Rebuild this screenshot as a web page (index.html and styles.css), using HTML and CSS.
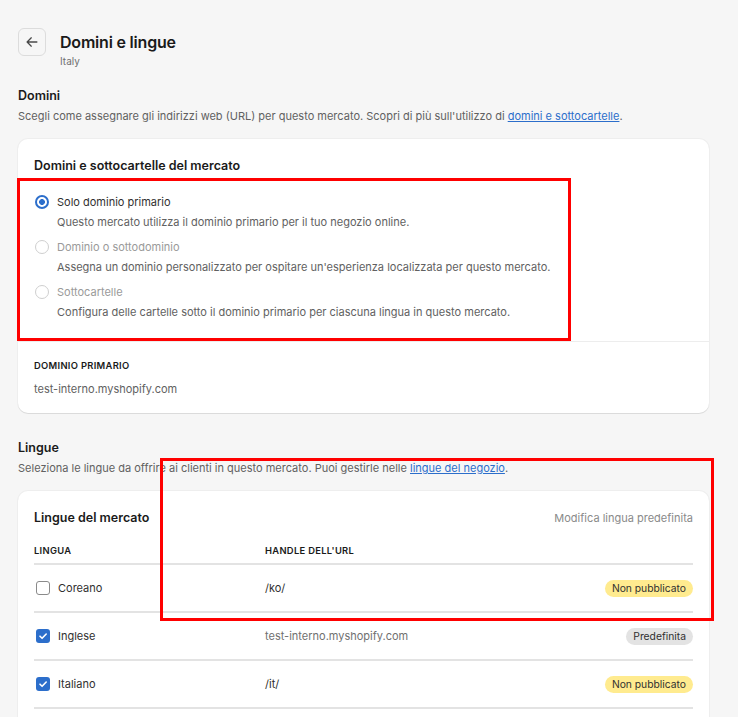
FILE: index.html
```html
<!DOCTYPE html>
<html lang="it">
<head>
    <meta charset="UTF-8">
    <title>Domini e lingue</title>
    <meta name="viewport" content="width=device-width, initial-scale=1">
    <link rel="stylesheet" href="styles.css">
</head>
<body>
    <div class="page">
        <div class="page-header">
            <button class="back-btn" aria-label="Indietro">
                <svg width="14" height="14" viewBox="0 0 20 20"><path d="M17 10H3.5M9 4l-6 6 6 6" fill="none" stroke="#4a4a4a" stroke-width="1.8" stroke-linecap="round" stroke-linejoin="round"/></svg>
            </button>
            <div class="title-block">
                <h1>Domini e lingue</h1>
                <div class="subtitle">Italy</div>
            </div>
        </div>

        <section class="section">
            <h2>Domini</h2>
            <p class="section-desc">Scegli come assegnare gli indirizzi web (URL) per questo mercato. Scopri di più sull'utilizzo di <a href="#">domini e sottocartelle</a>.</p>
            <div class="card">
                <div class="card-body">
                    <h3>Domini e sottocartelle del mercato</h3>
                    <div class="options">
                        <div class="option">
                            <span class="radio checked"></span>
                            <div>
                                <div class="option-label">Solo dominio primario</div>
                                <div class="option-desc">Questo mercato utilizza il dominio primario per il tuo negozio online.</div>
                            </div>
                        </div>
                        <div class="option disabled">
                            <span class="radio"></span>
                            <div>
                                <div class="option-label">Dominio o sottodominio</div>
                                <div class="option-desc">Assegna un dominio personalizzato per ospitare un'esperienza localizzata per questo mercato.</div>
                            </div>
                        </div>
                        <div class="option disabled">
                            <span class="radio"></span>
                            <div>
                                <div class="option-label">Sottocartelle</div>
                                <div class="option-desc">Configura delle cartelle sotto il dominio primario per ciascuna lingua in questo mercato.</div>
                            </div>
                        </div>
                    </div>
                </div>
                <div class="card-foot">
                    <div class="caps-label">Dominio primario</div>
                    <div class="foot-value">test-interno.myshopify.com</div>
                </div>
            </div>
        </section>

        <section class="section">
            <h2>Lingue</h2>
            <p class="section-desc">Seleziona le lingue da offrire ai clienti in questo mercato. Puoi gestirle nelle <a href="#">lingue del negozio</a>.</p>
            <div class="card">
                <div class="card-body lang-card">
                    <div class="lang-head">
                        <h3>Lingue del mercato</h3>
                        <span class="muted-action">Modifica lingua predefinita</span>
                    </div>
                    <div class="lang-table">
                        <div class="lang-row head">
                            <span class="caps-label">Lingua</span>
                            <span class="caps-label">Handle dell'URL</span>
                            <span></span>
                        </div>
                        <div class="lang-row">
                            <label class="lang-name"><span class="checkbox"></span>Coreano</label>
                            <span class="handle">/ko/</span>
                            <span class="badge warn">Non pubblicato</span>
                        </div>
                        <div class="lang-row">
                            <label class="lang-name"><span class="checkbox checked"></span>Inglese</label>
                            <span class="handle muted">test-interno.myshopify.com</span>
                            <span class="badge">Predefinita</span>
                        </div>
                        <div class="lang-row">
                            <label class="lang-name"><span class="checkbox checked"></span>Italiano</label>
                            <span class="handle">/it/</span>
                            <span class="badge warn">Non pubblicato</span>
                        </div>
                    </div>
                </div>
            </div>
        </section>

        <!-- riquadri di evidenziazione -->
        <div class="highlight hl-domains"></div>
        <div class="highlight hl-languages"></div>
    </div>
</body>
</html>
```

FILE: styles.css
```css
body {
    margin: 0;
    background: #f6f6f6;
    font-family: Inter, "Noto Sans", sans-serif;
    font-size: 11px;
    line-height: 20px;
    color: #303030;
    overflow: hidden;
}
.page {
    position: relative;
    padding: 28px 29px 40px 18px;
}
.page-header {
    display: flex;
    gap: 14px;
    margin-bottom: 18px;
}
.back-btn {
    width: 28px;
    height: 28px;
    padding: 0;
    border: 1px solid #dcdcdc;
    border-radius: 6px;
    background: #f6f6f6;
    display: flex;
    align-items: center;
    justify-content: center;
}
.title-block h1 {
    margin: 3px 0 0 0;
    font-size: 16px;
    line-height: 22px;
    font-weight: 600;
    color: #1a1a1a;
    letter-spacing: -0.2px;
}
.subtitle {
    margin-top: 1px;
    font-size: 10px;
    line-height: 14px;
    color: #707070;
}
.section {
    margin-bottom: 25px;
}
.section h2 {
    margin: 0;
    font-size: 12.5px;
    line-height: 20px;
    font-weight: 600;
    color: #1a1a1a;
}
.section-desc {
    margin: 0 0 13px 0;
    color: #616161;
    font-size: 11px;
}
.section-desc a {
    color: #2c6ecb;
    text-decoration: underline;
}
.card {
    background: #fff;
    border-radius: 10px;
    box-shadow: 0 1px 0 rgba(0, 0, 0, 0.08), 0 0 0 1px rgba(0, 0, 0, 0.03);
}
.card-body {
    padding: 17px 16px 19px 16px;
}
.card h3 {
    margin: 0;
    font-size: 12.5px;
    line-height: 20px;
    font-weight: 600;
    color: #1a1a1a;
}
.options {
    display: flex;
    flex-direction: column;
    gap: 5px;
    margin-top: 16px;
}
.option {
    display: flex;
    gap: 8px;
}
.radio {
    flex: none;
    box-sizing: border-box;
    width: 14px;
    height: 14px;
    margin: 3px 0 0 1px;
    border-radius: 50%;
    border: 1.5px solid #cfcfcf;
    background: #fff;
}
.radio.checked {
    border: 2px solid #2c6ecb;
    background: radial-gradient(circle, #2c6ecb 0, #2c6ecb 2.6px, #fff 3.2px);
}
.option-label {
    color: #303030;
}
.option.disabled .option-label {
    color: #9a9a9a;
}
.option-desc {
    color: #616161;
}
.card-foot {
    border-top: 1px solid #ededed;
    padding: 16px 16px 14px 16px;
    display: flex;
    flex-direction: column;
    gap: 5px;
}
.caps-label {
    font-size: 9.4px;
    line-height: 16px;
    font-weight: 600;
    text-transform: uppercase;
    letter-spacing: 0.3px;
    color: #1a1a1a;
}
.foot-value {
    color: #616161;
}
.lang-card {
    padding: 17px 16px 20px 16px;
}
.lang-head {
    display: flex;
    justify-content: space-between;
    align-items: center;
}
.muted-action {
    color: #8a8a8a;
}
.lang-table {
    margin-top: 3px;
}
.lang-row {
    display: grid;
    grid-template-columns: 231px 1fr auto;
    align-items: center;
    height: 46px;
    border-bottom: 2px solid #e3e3e3;
}
.lang-row.head {
    height: 34px;
    align-items: end;
    padding-bottom: 4px;
    box-sizing: border-box;
}
.lang-name {
    display: flex;
    align-items: center;
    gap: 8px;
    color: #303030;
}
.checkbox {
    box-sizing: border-box;
    width: 14px;
    height: 14px;
    margin-left: 2px;
    border: 1.5px solid #8a8a8a;
    border-radius: 3px;
    background: #fff;
}
.checkbox.checked {
    border: none;
    background: #2c6ecb url("data:image/svg+xml,%3Csvg xmlns='http://www.w3.org/2000/svg' viewBox='0 0 14 14'%3E%3Cpath d='M4 7.2l2.1 2.1L10.2 5' fill='none' stroke='white' stroke-width='1.6' stroke-linecap='round' stroke-linejoin='round'/%3E%3C/svg%3E") center / 14px 14px no-repeat;
}
.handle {
    color: #303030;
}
.handle.muted {
    color: #707070;
}
.badge {
    justify-self: end;
    padding: 0 7px;
    border-radius: 10px;
    background: #e3e3e3;
    font-size: 10.3px;
    line-height: 17px;
    color: #303030;
}
.badge.warn {
    background: #ffeb8f;
}
.highlight {
    position: absolute;
    box-sizing: border-box;
    width: 554px;
    height: 163px;
    border: 3px solid #ff0000;
    pointer-events: none;
}
.hl-domains {
    left: 17px;
    top: 178px;
}
.hl-languages {
    left: 160px;
    top: 458px;
}
```
